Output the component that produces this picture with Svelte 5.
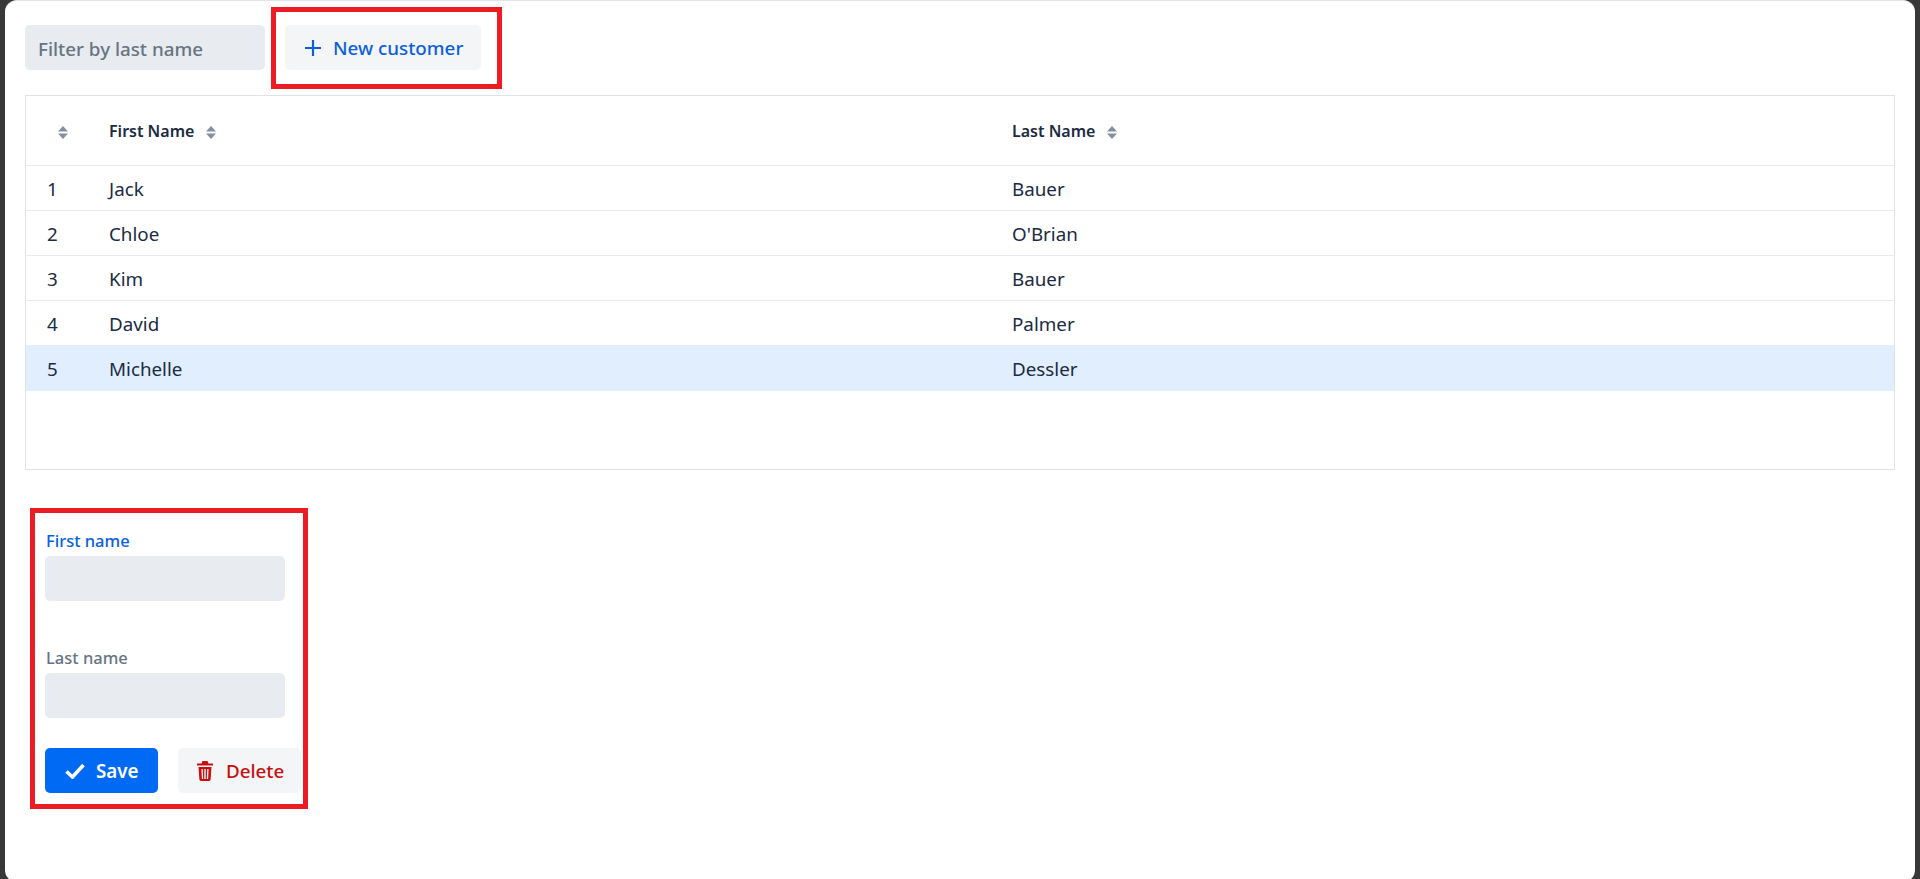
<script>
  const customers = [
    { first: 'Jack', last: 'Bauer' },
    { first: 'Chloe', last: "O'Brian" },
    { first: 'Kim', last: 'Bauer' },
    { first: 'David', last: 'Palmer' },
    { first: 'Michelle', last: 'Dessler' }
  ];
  let selected = $state(4);
</script>

{#snippet sorter()}
  <svg class="sorter" width="10" height="13" viewBox="0 0 10 13">
    <path d="M5 0 10 5.500H0z" />
    <path d="M5 13 0 7.500h10z" />
  </svg>
{/snippet}

<div class="window">
  <div class="toolbar">
    <input class="field filter" placeholder="Filter by last name" />
    <button class="btn tertiary new">
      <svg width="16" height="16" viewBox="0 0 16 16"><path d="M8 0v16M0 8h16" stroke="currentColor" stroke-width="2.200" fill="none" /></svg>
      New customer
    </button>
  </div>

  <div class="grid-box">
    <table>
      <colgroup>
        <col class="col-num" />
        <col class="col-first" />
        <col />
      </colgroup>
      <thead>
        <tr>
          <th class="num">{@render sorter()}</th>
          <th>First Name{@render sorter()}</th>
          <th>Last Name{@render sorter()}</th>
        </tr>
      </thead>
      <tbody>
        {#each customers as c, i}
          <tr class:selected={selected === i} onclick={() => (selected = i)}>
            <td class="num">{i + 1}</td>
            <td>{c.first}</td>
            <td>{c.last}</td>
          </tr>
        {/each}
      </tbody>
    </table>
  </div>

  <form class="editor">
    <label class="active">
      First name
      <input class="field" />
    </label>
    <label>
      Last name
      <input class="field" />
    </label>
    <div class="actions">
      <button type="button" class="btn save">
        <svg width="20" height="16" viewBox="0 0 20 16"><path d="M1.500 8.500 7.500 14 18.500 2" stroke="currentColor" stroke-width="3.600" fill="none" /></svg>
        Save
      </button>
      <button type="button" class="btn tertiary danger">
        <svg width="16" height="20" viewBox="0 0 16 20"><path fill="currentColor" fill-rule="evenodd" d="M5.500 0h5l1 2.500H16v2H0v-2h4.500zM1.500 6h13l-.9 12.500A1.600 1.600 0 0 1 12 20H4a1.600 1.600 0 0 1-1.600-1.500zM4.400 8l.5 10h1.300L5.800 8zm2.900 0v10h1.400V8zm2.900 0-.4 10h1.300l.5-10z" /></svg>
        Delete
      </button>
    </div>
  </form>

  <div class="mark mark-top"></div>
  <div class="mark mark-form"></div>
</div>

<style>
  :global(body) {
    background: #383838;
    overflow: hidden;
  }

  .window {
    position: relative;
    box-sizing: border-box;
    width: 1910px;
    height: 882px;
    margin-left: 5px;
    padding: 24px 20px 0;
    background: #fff;
    border-top: 1px solid #e4e4e4;
    border-radius: 12px;
    font-family: "Noto Sans", "Open Sans", sans-serif;
    font-size: 18.8px;
    color: #1a2b42;
  }

  .toolbar {
    display: flex;
    gap: 20px;
    height: 45px;
  }

  .field {
    display: block;
    box-sizing: border-box;
    width: 240px;
    height: 45px;
    padding: 2px 13px 0;
    border: 0;
    border-radius: 5px;
    background: #e8ebef;
    font: inherit;
    font-weight: 500;
  }

  .field::placeholder {
    color: #667484;
    opacity: 1;
  }

  .btn {
    display: inline-flex;
    align-items: center;
    height: 45px;
    padding-top: 2px;
    border: 0;
    border-radius: 5px;
    font: inherit;
    font-weight: 500;
    white-space: nowrap;
  }

  .tertiary {
    background: #f3f5f7;
  }

  .new {
    gap: 12px;
    width: 196px;
    padding-left: 20px;
    color: #0a60dc;
  }

  .grid-box {
    box-sizing: border-box;
    height: 375px;
    margin-top: 25px;
    border: 1px solid #dfe2e6;
  }

  table {
    width: 100%;
    border-collapse: collapse;
    table-layout: fixed;
  }

  .col-num {
    width: 66px;
  }

  .col-first {
    width: 903px;
  }

  th {
    height: 69px;
    padding: 0 0 0 17px;
    border-bottom: 1px solid #e8ebef;
    font-size: 16px;
    font-weight: 600;
    text-align: left;
  }

  td {
    box-sizing: border-box;
    height: 45px;
    padding: 2px 0 0 17px;
    border-bottom: 1px solid #e8ebef;
    font-weight: 400;
  }

  tbody tr:last-child td {
    border-bottom: 0;
  }

  td.num {
    padding-left: 21px;
  }

  th.num {
    padding-left: 32px;
  }

  th.num .sorter {
    margin-left: 0;
  }

  .sorter {
    margin-left: 12px;
    vertical-align: -2px;
    fill: #848fa0;
  }

  tr.selected td {
    background: #e1eefd;
    border-top: 1px solid #d3e1f2;
  }

  .editor {
    display: flex;
    flex-direction: column;
    gap: 47px;
    width: 300px;
    margin: 61px 0 0 20px;
  }

  label {
    display: block;
    height: 70px;
    padding-left: 1px;
    font-size: 16.500px;
    font-weight: 500;
    line-height: 20px;
    color: #667484;
  }

  label.active {
    color: #0a60dc;
  }

  label .field {
    margin: 5px 0 0 -1px;
  }

  .actions {
    display: flex;
    gap: 20px;
    margin-top: -17px;
  }

  .save {
    gap: 11px;
    width: 113px;
    padding-left: 20px;
    background: #006af5;
    color: #fff;
    font-weight: 600;
  }

  .danger {
    gap: 13px;
    width: 123px;
    padding-left: 19px;
    color: #c80f0f;
  }

  .mark {
    position: absolute;
    box-sizing: border-box;
    border: 5px solid #ed1c24;
    pointer-events: none;
  }

  .mark-top {
    left: 266px;
    top: 6px;
    width: 231px;
    height: 82px;
  }

  .mark-form {
    left: 25px;
    top: 507px;
    width: 278px;
    height: 301px;
  }
</style>
